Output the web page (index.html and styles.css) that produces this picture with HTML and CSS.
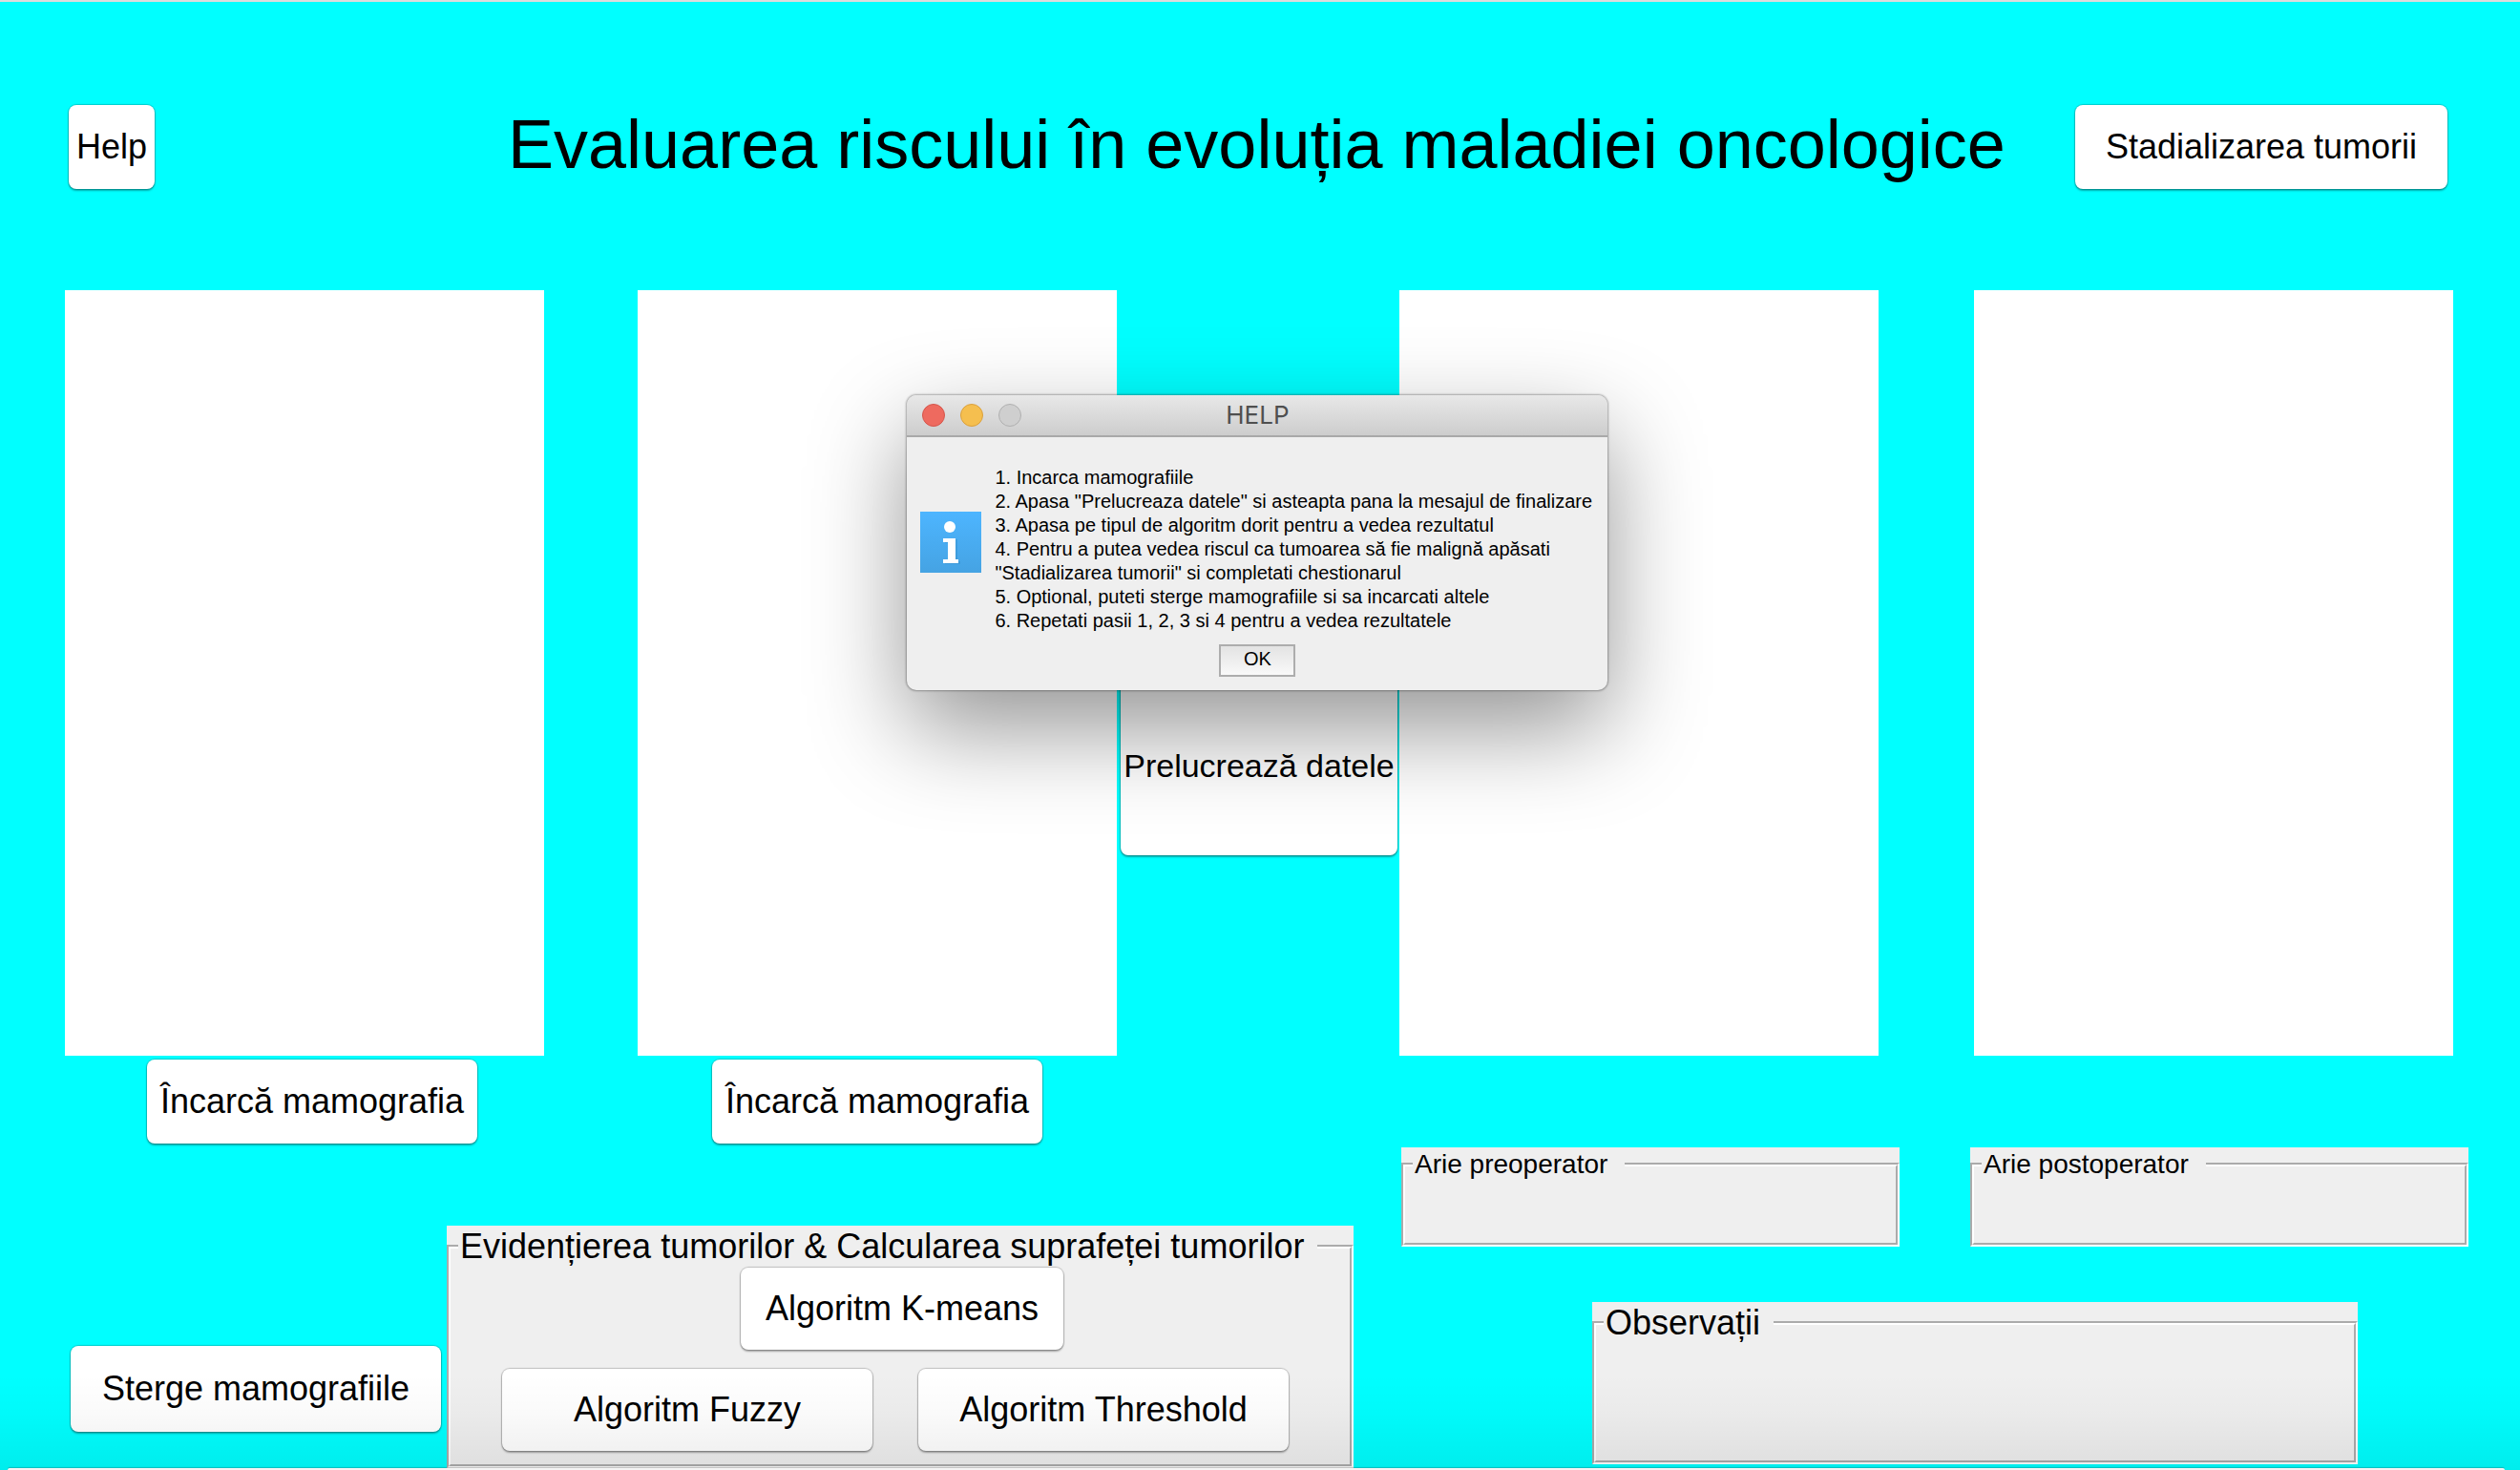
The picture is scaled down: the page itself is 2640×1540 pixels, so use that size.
FILE: index.html
```html
<!DOCTYPE html>
<html lang="ro">
<head>
<meta charset="utf-8">
<title>Evaluarea riscului în evoluția maladiei oncologice</title>
<link rel="stylesheet" href="styles.css">
</head>
<body>
<header class="header">
  <button class="btn help" type="button">Help</button>
  <h1 class="title">Evaluarea riscului în evoluția maladiei oncologice</h1>
  <button class="btn staging" type="button">Stadializarea tumorii</button>
</header>
<main>
  <section class="scans">
    <div class="scan scan-a"></div>
    <div class="scan scan-b"></div>
    <button class="btn process" type="button">Prelucrează datele</button>
    <div class="scan scan-c"></div>
    <div class="scan scan-d"></div>
  </section>
  <section class="loaders">
    <button class="btn load-a" type="button">Încarcă mamografia</button>
    <button class="btn load-b" type="button">Încarcă mamografia</button>
  </section>
  <section class="lower">
    <button class="btn clear" type="button">Sterge mamografiile</button>
    <div class="group algorithms">
      <fieldset class="frame">
        <legend class="legend">Evidențierea tumorilor &amp; Calcularea suprafeței tumorilor</legend>
        <div class="algo-top">
          <button class="btn kmeans" type="button">Algoritm K-means</button>
        </div>
        <div class="algo-row">
          <button class="btn fuzzy" type="button">Algoritm Fuzzy</button>
          <button class="btn threshold" type="button">Algoritm Threshold</button>
        </div>
      </fieldset>
    </div>
    <div class="results">
      <div class="areas">
        <div class="group area">
          <fieldset class="frame"><legend class="legend small">Arie preoperator</legend></fieldset>
        </div>
        <div class="group area">
          <fieldset class="frame"><legend class="legend small">Arie postoperator</legend></fieldset>
        </div>
      </div>
      <div class="notes-row">
        <div class="group notes">
          <fieldset class="frame"><legend class="legend">Observații</legend></fieldset>
        </div>
      </div>
    </div>
  </section>
</main>
<div class="window-edge"></div>
<dialog class="dialog" open aria-labelledby="dialog-title">
  <div class="titlebar">
    <div class="lights">
      <button class="light close" type="button" aria-label="Close"></button>
      <button class="light minimize" type="button" aria-label="Minimize"></button>
      <button class="light zoom" type="button" aria-label="Zoom" disabled></button>
    </div>
    <h2 class="dialog-title" id="dialog-title">HELP</h2>
  </div>
  <div class="message">
    <svg class="info" viewBox="0 0 64 64" aria-hidden="true">
      <defs>
        <linearGradient id="blue" x1="0" y1="0" x2="0" y2="1">
          <stop offset="0" stop-color="#4db5ff"/>
          <stop offset="1" stop-color="#45a3e3"/>
        </linearGradient>
      </defs>
      <rect width="64" height="64" fill="url(#blue)"/>
      <path d="M26 29h13v23h3v3H26v-3h5V33h-5z" fill="#2f86c4" opacity=".35"/>
      <ellipse cx="31" cy="16" rx="6" ry="6" fill="#fff"/>
      <path d="M24 28h13v22h3v4H24v-4h5V32h-5z" fill="#fff"/>
    </svg>
    <p class="steps">1. Incarca mamografiile<br>2. Apasa "Prelucreaza datele" si asteapta pana la mesajul de finalizare<br>3. Apasa pe tipul de algoritm dorit pentru a vedea rezultatul<br>4. Pentru a putea vedea riscul ca tumoarea să fie malignă apăsati<br>"Stadializarea tumorii" si completati chestionarul<br>5. Optional, puteti sterge mamografiile si sa incarcati altele<br>6. Repetati pasii 1, 2, 3 si 4 pentru a vedea rezultatele</p>
  </div>
  <button class="ok" type="button">OK</button>
</dialog>
</body>
</html>
```
FILE: styles.css
```css
* { box-sizing: border-box; }

body {
  position: relative;
  margin: 0;
  min-height: 100vh;
  overflow-x: hidden;
  border-top: 2px solid #dcdcdc;
  background: #00ffff;
  color: #000;
  font-family: "Liberation Sans", Arial, sans-serif;
  font-size: 36px;
}

.btn {
  height: 88px;
  padding: 0;
  border: 0;
  border-radius: 8px;
  background: #fff;
  box-shadow: 0 0 1px 1px rgba(0, 0, 0, 0.2), 0 2px 2px rgba(0, 0, 0, 0.3);
  color: #000;
  font-family: inherit;
  font-size: 36px;
  white-space: nowrap;
}

.header {
  display: grid;
  grid-template-columns: 72fr 90fr 370fr 1642fr 390fr 76fr;
  padding-top: 108px;
}
.help { grid-column: 2; }
.title {
  grid-column: 4;
  margin: 0;
  font-size: 72px;
  font-weight: 400;
  line-height: 82px;
  white-space: nowrap;
}
.staging { grid-column: 5; }

.scans {
  display: grid;
  grid-template-columns: 68fr 502fr 98fr 502fr 4fr 290fr 2fr 502fr 100fr 502fr 70fr;
  margin-top: 106px;
}
.scan { min-height: 802px; background: #fff; }
.scan-a { grid-column: 2; }
.scan-b { grid-column: 4; }
.scan-c { grid-column: 8; }
.scan-d { grid-column: 10; }
.process {
  grid-column: 6;
  align-self: end;
  height: 188px;
  margin-bottom: 210px;
  font-size: 34px;
}

.loaders {
  display: grid;
  grid-template-columns: 154fr 346fr 246fr 346fr 1548fr;
  margin-top: 4px;
}
.load-a { grid-column: 2; }
.load-b { grid-column: 4; }

.lower {
  display: grid;
  grid-template-columns: 74fr 388fr 6fr 950fr 50fr 1118fr 54fr;
  padding: 4px 0 2px;
}
.clear {
  grid-column: 2;
  align-self: end;
  height: 90px;
  margin-bottom: 38px;
}

.group { display: grid; background: #efefef; }
.frame {
  min-width: 0;
  margin: 0;
  padding: 0 8px;
  border: 4px groove #fff;
}
.legend {
  padding: 0 14px 0 2px;
  line-height: 44px;
  white-space: nowrap;
}
.legend.small {
  padding-right: 18px;
  font-size: 28px;
  line-height: 36px;
}

.algorithms { grid-column: 4; margin-top: 82px; }
.algorithms .btn { height: 86px; }
.algo-top {
  display: grid;
  grid-template-columns: 296fr 338fr 292fr;
}
.kmeans { grid-column: 2; }
.algo-row {
  display: grid;
  grid-template-columns: 46fr 388fr 48fr 388fr 56fr;
  padding: 20px 0 14px;
}
.fuzzy { grid-column: 2; }
.threshold { grid-column: 4; }

.results {
  grid-column: 6;
  display: flex;
  flex-direction: column;
  gap: 58px;
}
.areas {
  display: grid;
  grid-template-columns: 522fr 522fr;
  gap: 74px;
}
.area { min-height: 104px; }
.notes-row {
  display: grid;
  grid-template-columns: 200fr 802fr 116fr;
}
.notes { grid-column: 2; min-height: 170px; }

/* top edge and shadow of the window lying below */
.window-edge {
  position: absolute;
  right: 0;
  bottom: 0;
  left: 0;
  height: 100px;
  background: linear-gradient(rgba(0, 0, 0, 0), rgba(0, 0, 0, 0.02) 40%, rgba(0, 0, 0, 0.07));
  pointer-events: none;
}
.window-edge::after {
  content: "";
  position: absolute;
  right: 16px;
  bottom: 0;
  left: 8px;
  height: 2px;
  border-radius: 8px 8px 0 0;
  background: #f4f4f4;
  box-shadow: 0 -1px 1px rgba(0, 0, 0, 0.2);
}

.dialog {
  position: absolute;
  top: 412px;
  left: 36%;
  display: flex;
  flex-direction: column;
  align-items: center;
  width: 734px;
  margin: 0;
  padding: 0 0 14px;
  border: 0;
  border-radius: 10px;
  background: #efefef;
  box-shadow: 0 0 2px 1px rgba(0, 0, 0, 0.3), 0 40px 100px rgba(0, 0, 0, 0.42);
  color: #000;
  font-size: 20px;
}
.titlebar {
  display: grid;
  grid-template-columns: 1fr auto 1fr;
  align-items: center;
  width: 100%;
  height: 44px;
  padding: 0 16px;
  border-bottom: 2px solid #a9a9a9;
  border-radius: 10px 10px 0 0;
  background: linear-gradient(#e8e8e8, #cdcdcd);
}
.lights { display: flex; gap: 16px; }
.light {
  width: 24px;
  height: 24px;
  padding: 0;
  border: 1px solid #d5554b;
  border-radius: 50%;
  background: #ee6a5f;
}
.light.minimize { border-color: #dba03c; background: #f5bf4f; }
.light.zoom { border-color: #b0b0b0; background: #cfcfcf; }
.dialog-title {
  margin: 0;
  color: #4f4f4f;
  font-family: Inter, sans-serif;
  font-size: 26px;
  font-weight: 400;
  line-height: 32px;
}
.message {
  display: flex;
  align-items: center;
  gap: 14px;
  width: 100%;
  padding: 30px 14px 12px;
}
.info { flex: none; width: 64px; height: 64px; margin-bottom: 16px; }
.steps { margin: 0; line-height: 25px; white-space: nowrap; }
.ok {
  width: 80px;
  height: 34px;
  padding: 0 0 4px;
  border: 2px solid #adadad;
  background: linear-gradient(#e3e3e3, #f9f9f9);
  color: #000;
  font-family: inherit;
  font-size: 20px;
}
```
